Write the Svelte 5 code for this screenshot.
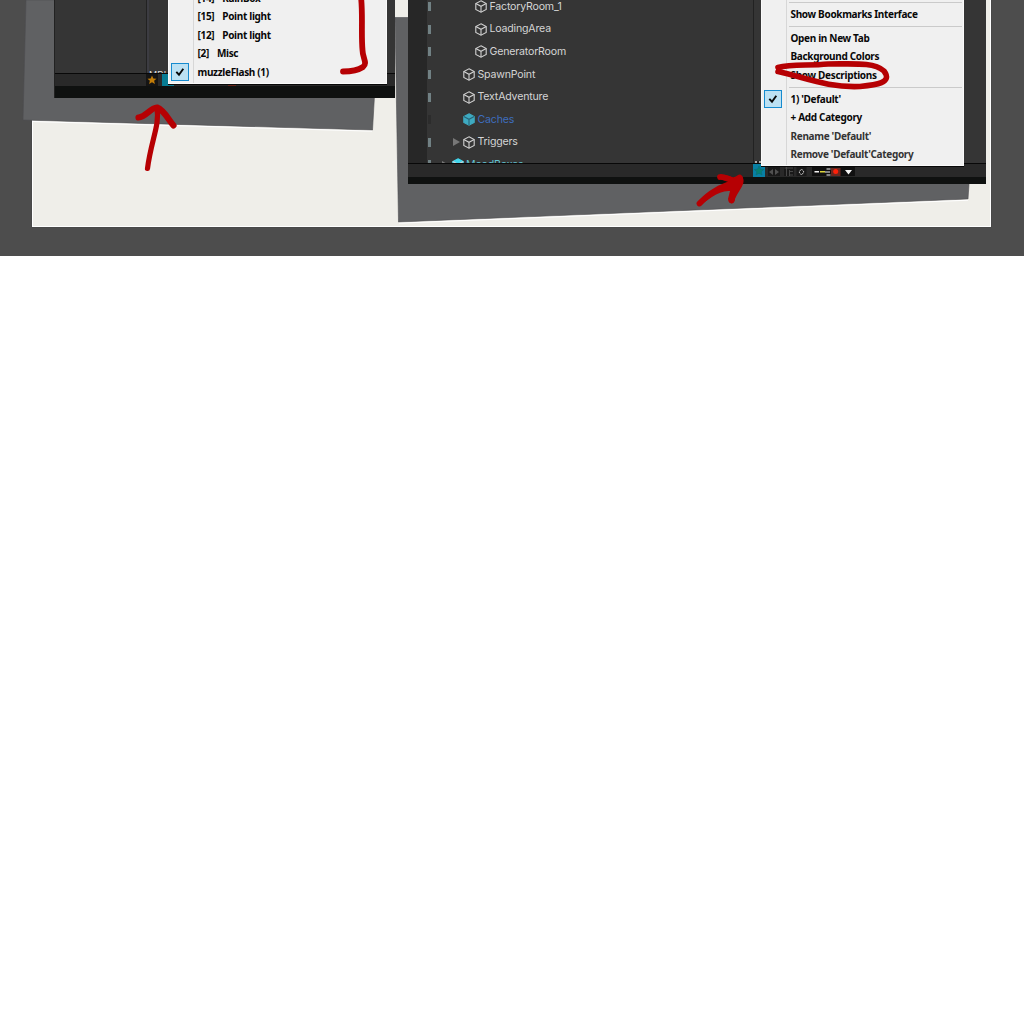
<script>
  const recent = [
    { count: '[14]', name: 'RainBox' },
    { count: '[15]', name: 'Point light' },
    { count: '[12]', name: 'Point light' },
    { count: '[2]', name: 'Misc' },
    { count: '', name: 'muzzleFlash (1)', checked: true }
  ];
  const tree = [
    { name: 'FactoryRoom_1', kind: 'deep' },
    { name: 'LoadingArea', kind: 'deep' },
    { name: 'GeneratorRoom', kind: 'deep' },
    { name: 'SpawnPoint', kind: 'mid' },
    { name: 'TextAdventure', kind: 'mid' },
    { name: 'Caches', kind: 'mid prefab' },
    { name: 'Triggers', kind: 'mid', arrow: true },
    { name: 'MoodBoxes', kind: 'top', arrow: true }
  ];
  const groups = [
    [{ name: 'Show Bookmarks Interface' }],
    [{ name: 'Open in New Tab' }, { name: 'Background Colors' }, { name: 'Show Descriptions' }],
    [
      { name: "1) 'Default'", checked: true },
      { name: '+ Add Category' },
      { name: "Rename 'Default'", muted: true },
      { name: "Remove 'Default'Category", muted: true }
    ]
  ];
</script>

{#snippet check()}
  <span class="check"><svg viewBox="0 0 16 16"><path d="M4.300 7.800 7 10.700 11.300 4.800" /></svg></span>
{/snippet}

<main>
  <section class="paper"></section>
  <svg class="shadows" viewBox="0 0 1024 256">
    <path d="M26 0H380L372.500 130 23 120Z" />
    <path d="M395 17.500H980L968 199 398.500 222Z" />
    <path class="rim" d="M32 121.500 372 131.200M399 223.200 968 200.200" />
  </svg>

  <section class="window left">
    <div class="body"><i></i><b>MDL</b></div>
    <div class="toolbar">
      <span class="star"><svg viewBox="0 0 12 12"><path d="m6 1.500 1.300 3 3.200.2-2.400 2 .8 3.300L6 8.300 3.100 10l.8-3.300-2.400-2 3.200-.2Z" /></svg></span>
      <span class="active"></span>
      <span class="record"></span>
    </div>
    <div class="menu">
      {#each recent as item}
        <div class="item">
          {#if item.checked}{@render check()}{/if}
          {#if item.count}<span class="count">{item.count}</span>{/if}<span>{item.name}</span>
        </div>
      {/each}
    </div>
  </section>

  <section class="window right">
    <div class="body">
      <div class="tree">
        {#each tree as row}
          <div class="row {row.kind}">
            <em></em>
            <span class="arrow">{#if row.arrow}<svg viewBox="0 0 7 8"><path d="M0 0 7 4 0 8Z" /></svg>{/if}</span>
            <svg class="cube" viewBox="0 0 12 13"><path class="shell" d="M6 .8 11.200 3.500V9.500L6 12.200.8 9.500V3.500Z" /><path class="edges" d="m.8 3.500 5.200 2.800 5.200-2.800M6 6.300v5.900" /></svg>
            <span class="label">{row.name}</span>
          </div>
        {/each}
      </div>
    </div>
    <div class="toolbar">
      <svg viewBox="0 0 110 13">
        <path fill="#191919" d="M15 2h12v10H15zM31 2h10v10H31zM43.500 2h10v10h-10z" />
        <path fill="#101010" d="M59 1h42v11H59z" />
        <path fill="#0880a4" d="M0 0h12v13H0z" />
        <path fill="#078174" stroke="#086c78" stroke-width=".6" d="m6 2 1.400 3.200 3.300.3-2.500 2.200.8 3.300-3-1.800L3 11l.8-3.300-2.500-2.200 3.300-.3Z" />
        <path fill="#505050" d="M20 5v6l-4-3zM22 5v6l4-3z" />
        <path stroke="#484848" fill="none" d="M31.500 4h8.500M33.500 3v9M36 7.500h4M36.500 6v6M36 11h4" />
        <path stroke="#c4c4c4" stroke-width="1" stroke-dasharray="2 .6" fill="none" d="m48.500 5 2.500 3-2.500 3L46 8Z" />
        <path fill="#f4f4f4" d="M61.500 7H66v1.500h-4.500zM73.500 4.500h4v1h-4zM72 7.500h5v1h-5zM73.500 10.500h4v1h-4zM92 6h7l-3.500 4.500z" />
        <path fill="#ded63c" d="M67 7h5v1.500h-5z" />
        <path fill="#6c2820" d="M78 4h9.500v8H78z" /><circle cx="82.700" cy="7.500" r="2.500" fill="#ff2009" />
        <path stroke="#111" d="M101.500 0v12" />
      </svg>
    </div>
    <div class="menu">
      {#each groups as group}
        <div class="group">
          {#each group as item}
            <div class="item" class:muted={item.muted}>
              {#if item.checked}{@render check()}{/if}
              <span>{item.name}</span>
            </div>
          {/each}
        </div>
      {/each}
    </div>
    <span class="dots"></span>
  </section>

  <svg class="ink" viewBox="0 0 1024 256">
    <path d="M361 -3C363 14 361 34 362.500 50C362.500 58 368 63 363 67C357 71 350 71.500 343 71.500" stroke-width="5.800" />
    <path d="M138.500 117.500C146 117 150 108 157 107.500C164 110 168 119 173.500 125.500" stroke-width="6.200" />
    <path d="M157 109C160 124 151 141 147.500 168.500" stroke-width="5.200" />
    <path d="M778 67.500C792 63.500 808 66 828 64C854 64 874 62 884 71C893 83 876 85 860 86.500C828 88 804 77 778 71.500" stroke-width="5.600" />
    <path d="M699.500 203.500C712 190 722 187 738 181M720 177C727 176 731 184 739.500 177.500C744 184 734 190 731.500 200.500" stroke-width="5.800" />
    <path class="solid" d="M697 205C706 195 716 187 731 182 728 180 720 181 718 178 718 173 730 175 735 179 738 175 742 174 743 178 743 188 734 194 735 200 733 205 729 204 728 199L730 191C718 190 707 201 699 206Z" />
  </svg>
</main>

<style>
  :global(body) { background: #fff; }
  main { position: relative; width: 1024px; height: 256px; overflow: hidden; background: #4d4d4d; }
  .paper { box-sizing: border-box; width: 959px; height: 227px; margin-left: 32px; background: #efeee9; border: solid #fff; border-width: 0 1px 1px; box-shadow: 0 0 1px #353535; }
  .shadows, .ink { position: absolute; top: 0; left: 0; width: 1024px; height: 256px; }
  .shadows path { fill: #606163; stroke: #4d4e51; stroke-width: .6; }
  .shadows .rim { fill: none; stroke: #fff; stroke-width: 1; }
  .ink path { fill: none; stroke: #b60003; stroke-linecap: round; stroke-linejoin: round; }
  .ink .solid { fill: #b60003; stroke: none; }

  .window { position: absolute; top: 0; display: flex; flex-direction: column; box-sizing: border-box; background: #0f1110; }
  .window > .body { background: #353535; overflow: hidden; border-bottom: 1px solid #080808; }
  .window > .toolbar { background: #292929; flex: none; }
  .left { left: 54px; width: 341px; height: 98px; border-left: 1px solid #222; }
  .left .body { height: 74px; display: flex; box-sizing: border-box; padding-left: 91px; align-items: end; }
  .left .body i { width: 2px; height: 100%; border-left: 1px solid #222; background: #3c3c42; }
  .left .body b { height: 3px; overflow: hidden; font: 9px/9px Inter, sans-serif; color: #ddd; }
  .left .toolbar { height: 12px; display: flex; padding-left: 91px; }
  .star { width: 12px; height: 12px; background: #151515; }
  .star svg { display: block; width: 12px; fill: #c17c08; }
  .active { width: 12px; margin-left: 4px; background: #087c93; }
  .record { width: 8px; height: 2px; margin: 10px 0 0 54px; background: #672519; }

  .right { left: 408px; width: 578px; height: 184px; }
  .right .body { height: 164px; box-sizing: border-box; padding-left: 19px; background: linear-gradient(90deg, #272727 19px, #353535 19px, #353535 345px, #222 345px, #222 346px, #353535 346px); }
  .right .toolbar { height: 13px; padding-left: 345px; }
  .right .toolbar svg { display: block; width: 110px; height: 13px; }
  .tree { margin-top: -4.500px; }
  .row { height: 22.600px; display: flex; align-items: center; font: 10.600px/16px Inter, sans-serif; letter-spacing: -.19px; color: #d4d4d4; }
  .row em { width: 3px; height: 9px; margin-left: .500px; background: #718184; }
  .arrow { width: 7px; display: flex; margin-left: 22.500px; margin-right: 3px; }
  .arrow svg { width: 7px; height: 8px; fill: #777; }
  .cube { width: 12px; height: 13px; margin-right: 2.500px; fill: none; stroke: #d1d1d1; stroke-width: 1.100; }
  .deep .arrow { margin-left: 34.500px; }
  .top .arrow { margin-left: 11px; }
  .prefab { color: #3e6dbe; }
  .prefab em { background: #2c2c2c; }
  .prefab .shell { fill: #3eaac1; stroke: #3eaac1; }
  .prefab .edges { stroke: #286477; }
  .top .shell { fill: #42d5ec; stroke: #42d5ec; }
  .top { color: #62c4d4; }

  .menu { position: absolute; box-sizing: border-box; background: linear-gradient(90deg, #f0f0f0 24px, #d7d7d7 24px, #d7d7d7 25px, #f0f0f0 25px); border: 1px solid #fafafa; border-top: 0; box-shadow: 0 1px 0 #080808; font: 700 10px/18.400px "Noto Sans", "Open Sans", sans-serif; letter-spacing: -.32px; color: #080808; white-space: nowrap; }
  .item { position: relative; height: 18.400px; }
  .left .menu { left: 113px; top: 0; width: 219px; height: 84px; padding-left: 28.500px; overflow: hidden; }
  .left .item:first-child { margin-top: -11px; }
  .count { margin-right: 8px; }
  .right .menu { left: 353px; top: 0; width: 203px; height: 166px; padding-left: 28.500px; padding-top: 2px; }
  .group { position: relative; height: 24px; box-sizing: border-box; padding-top: 3px; }
  .group::before { content: ""; position: absolute; top: 0; left: -2px; right: 1px; height: 1px; background: #cacaca; }
  .group:nth-child(2) { height: 61px; }
  .muted { color: #343434; }
  .check { position: absolute; left: -26.500px; top: 0; width: 16px; height: 16px; border: 1px solid #168bcf; background: #bce1f3; }
  .check svg { display: block; width: 16px; height: 16px; fill: none; stroke: #080808; stroke-width: 1.900; }
  .dots { position: absolute; left: 347px; top: 161px; width: 6px; height: 2px; background: linear-gradient(90deg, #aaa 2px, #222 2px, #222 4px, #aaa 4px); }
</style>
